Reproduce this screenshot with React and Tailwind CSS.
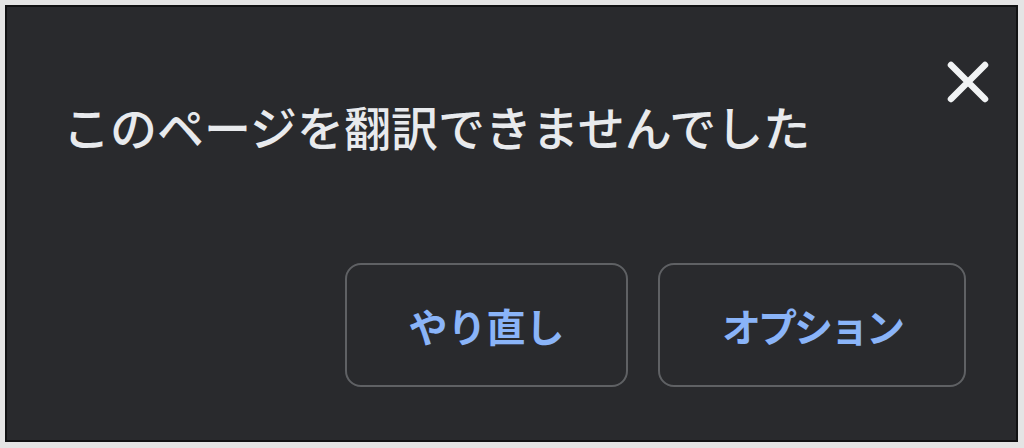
import React from 'react';

const CloseIcon = () => (
  <svg width="44" height="44" viewBox="0 0 44 44" fill="none">
    <path d="M5 5 L39 39 M39 5 L5 39" stroke="#f1f3f4" strokeWidth="6.5" strokeLinecap="round" />
  </svg>
);

const App = () => {
  return (
    <div
      className="w-[1024px] h-[448px] bg-[#e4e4e4] pt-[5px] pl-[5px] pr-[6px] pb-[6px]"
      style={{ fontFamily: '"Noto Sans CJK JP", "Noto Sans", sans-serif' }}
    >
      <div className="w-full h-full border-2 border-[#111213] bg-[#292a2d] flex flex-col">
        <div className="flex justify-between items-start pl-[56px] pr-[26px] pt-[53px]">
          <h1 className="pt-[42px] text-[47px] leading-none font-medium text-[#e8eaed]">
            このページを翻訳できませんでした
          </h1>
          <button className="w-[44px] h-[44px] flex items-center justify-center">
            <CloseIcon />
          </button>
        </div>

        <div className="mt-auto flex justify-end gap-[30px] pr-[50px] pb-[53px]">
          <button className="w-[283px] h-[124px] rounded-[16px] border-2 border-[#5f6164] flex items-center justify-center text-[39px] font-bold text-[#8ab4f8] leading-none">
            やり直し
          </button>
          <button className="w-[308px] h-[124px] rounded-[16px] border-2 border-[#5f6164] flex items-center justify-center text-[39px] font-bold text-[#8ab4f8] leading-none tracking-[-3px]">
            オプション
          </button>
        </div>
      </div>
    </div>
  );
};

export default App;
